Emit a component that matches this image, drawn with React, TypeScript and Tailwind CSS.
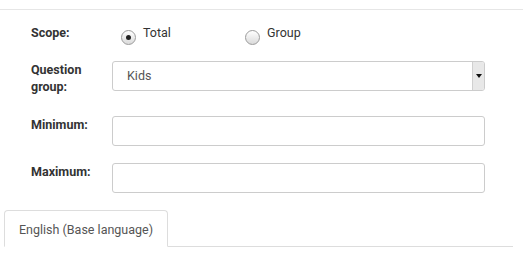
import React from 'react';

const Radio = ({ checked, label }: { checked?: boolean; label: string }) => (
  <div className="flex w-[124px] items-start">
    <span className="mt-[6px] flex h-[15px] w-[15px] items-center justify-center rounded-full border border-[#9b9b9b] bg-gradient-to-b from-white to-[#dadada]">
      {checked && <span className="h-[5px] w-[5px] rounded-full bg-[#222]" />}
    </span>
    <span className="ml-[7px] text-[12.5px] leading-[17px] text-[#333]">{label}</span>
  </div>
);

const Label = ({ children }: { children: React.ReactNode }) => (
  <div className="w-[81px] shrink-0 text-[12.5px] font-bold leading-[17px] text-[#333]">{children}</div>
);

const App = () => {
  return (
    <div className="h-[271px] w-[523px] overflow-hidden bg-white font-['Roboto',sans-serif]">
      {/* top rule */}
      <div className="h-[10px] border-b border-[#e6e6e6]" />

      <div className="pl-[31px] pt-[14px]">
        {/* Scope */}
        <div className="flex h-[37px]">
          <Label>Scope:</Label>
          <div className="ml-[9px] flex">
            <Radio checked label="Total" />
            <Radio label="Group" />
          </div>
        </div>

        {/* Question group */}
        <div className="mb-[21px] flex">
          <Label>
            Question
            <br />
            group:
          </Label>
          <div className="relative flex h-[30px] w-[373px] items-center rounded-[3px] border border-[#ccc] bg-white">
            <span className="pl-[14px] text-[12.5px] text-[#555]">Kids</span>
            <div className="absolute right-0 top-0 flex h-full w-[12px] items-center justify-center rounded-r-[2px] border-l border-[#d0d0d0] bg-[#e8e8e8]">
              <svg width="6" height="4" viewBox="0 0 6 4">
                <path d="M0 0 H6 L3 4 Z" fill="#111" />
              </svg>
            </div>
          </div>
        </div>

        {/* Minimum */}
        <div className="mb-[17px] flex">
          <Label>Minimum:</Label>
          <div className="h-[30px] w-[373px] rounded-[3px] border border-[#ccc] bg-white" />
        </div>

        {/* Maximum */}
        <div className="flex">
          <Label>Maximum:</Label>
          <div className="h-[30px] w-[373px] rounded-[3px] border border-[#ccc] bg-white" />
        </div>
      </div>

      {/* language tabs */}
      <div className="ml-[4px] mt-[17px] flex w-[509px] border-b border-[#ddd]">
        <div className="-mb-px rounded-t-[4px] border border-[#ddd] border-b-white bg-white px-[14px] pb-[8px] pt-[10px] text-[12.5px] leading-[17px] text-[#555]">
          English (Base language)
        </div>
      </div>
    </div>
  );
};

export default App;
